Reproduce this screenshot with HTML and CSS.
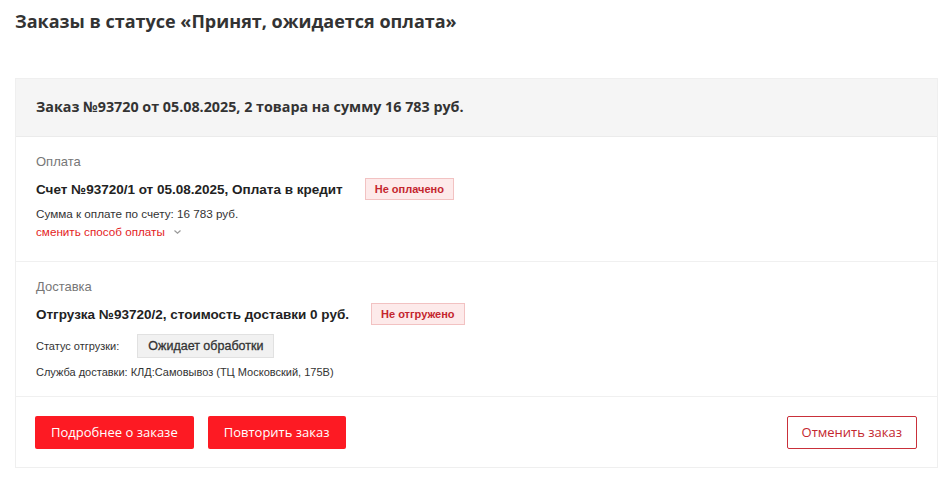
FILE: index.html
```html
<!DOCTYPE html>
<html lang="ru">
<head>
<meta charset="utf-8">
<link rel="stylesheet" href="styles.css">
</head>
<body>
<div class="page">
  <h1 class="title">Заказы в статусе «Принят, ожидается оплата»</h1>
  <div class="card">
    <div class="card-head">Заказ №93720 от 05.08.2025, 2 товара на сумму 16 783 руб.</div>
    <div class="section">
      <div class="label">Оплата</div>
      <div class="row">
        <span class="strong">Счет №93720/1 от 05.08.2025, Оплата в кредит</span>
        <span class="badge badge-pay">Не оплачено</span>
      </div>
      <div class="small">Сумма к оплате по счету: 16 783 руб.</div>
      <div class="link">сменить способ оплаты <svg class="chev" width="9" height="6" viewBox="0 0 9 6"><path d="M1.5 1.5 L4.5 4.3 L7.5 1.5" fill="none" stroke="#999" stroke-width="1.2"/></svg></div>
    </div>
    <div class="section section-del">
      <div class="label">Доставка</div>
      <div class="row">
        <span class="strong">Отгрузка №93720/2, стоимость доставки 0 руб.</span>
        <span class="badge badge-del">Не отгружено</span>
      </div>
      <div class="status-row">
        <span class="small">Статус отгрузки:</span>
        <span class="status">Ожидает обработки</span>
      </div>
      <div class="small">Служба доставки: КЛД:Самовывоз (ТЦ Московский, 175В)</div>
    </div>
    <div class="actions">
      <a class="btn btn-red">Подробнее о заказе</a>
      <a class="btn btn-red">Повторить заказ</a>
      <a class="btn btn-outline">Отменить заказ</a>
    </div>
  </div>
</div>
</body>
</html>
```
FILE: styles.css
```css
* { box-sizing: border-box; }
html, body { margin: 0; padding: 0; background: #fff; }
body { font-family: "Liberation Sans", Arial, sans-serif; color: #222; }
.page { padding: 0 9px 0 15px; }
.title {
  font-family: "Open Sans", sans-serif;
  font-weight: 700;
  font-size: 18px;
  color: #333;
  margin: 0;
  padding-top: 9px;
  line-height: 24px;
  height: 78px;
}
.card {
  border: 1px solid #efefef;
  width: 923px;
}
.card-head {
  background: #f5f5f5;
  font-family: "Open Sans", sans-serif;
  font-weight: 700;
  font-size: 14.3px;
  color: #333;
  height: 58px;
  padding: 18px 20px 0 20px;
  line-height: 20px;
  border-bottom: 1px solid #ebebeb;
}
.section {
  padding: 16px 20px 0 20px;
  height: 125px;
  border-bottom: 1px solid #f0f0f0;
}
.section-del { height: 135px; }
.label { font-size: 13px; color: #777; line-height: 18px; }
.row { display: flex; align-items: center; margin-top: 7px; height: 22px; }
.strong { font-weight: 700; font-size: 13.5px; color: #222; }
.badge {
  margin-left: 22px;
  font-size: 11px;
  font-weight: 700;
  color: #c4262e;
  background: #fdeaea;
  border: 1px solid #f2c2c2;
  height: 22px;
  line-height: 20px;
  padding: 0 9px;
}
.small { font-size: 11px; color: #333; line-height: 16px; }
.section > .small { margin-top: 6px; font-size: 11.7px; }
.link { font-size: 11.7px; color: #e41c24; line-height: 16px; margin-top: 2px; display: flex; align-items: center; }
.chev { margin-left: 8px; }
.status-row { display: flex; align-items: center; margin-top: 9px; height: 24px; }
.status {
  margin-left: 18px;
  background: #f1f1f1;
  border: 1px solid #e1e1e1;
  font-size: 12.5px;
  font-weight: 400;
  color: #333;
  height: 24px;
  line-height: 22px;
  padding: 0 10px;
  -webkit-text-stroke: 0.3px #333;
}
.section-del > .small { margin-top: 6px; font-size: 11px; }
.actions {
  display: flex;
  gap: 14px;
  padding: 19px 20px 18px 19px;
}
.btn {
  font-family: "Open Sans", sans-serif;
  font-size: 13px;
  height: 33px;
  line-height: 31px;
  padding: 0 15px;
  border-radius: 2px;
  border: 1px solid transparent;
  white-space: nowrap;
}
.btn-red { background: #fd1a23; color: #fff; }
.btn-outline {
  margin-left: auto;
  border-color: #c9303a;
  color: #c4262e;
  background: #fff;
  padding: 0 14px;
}
```
